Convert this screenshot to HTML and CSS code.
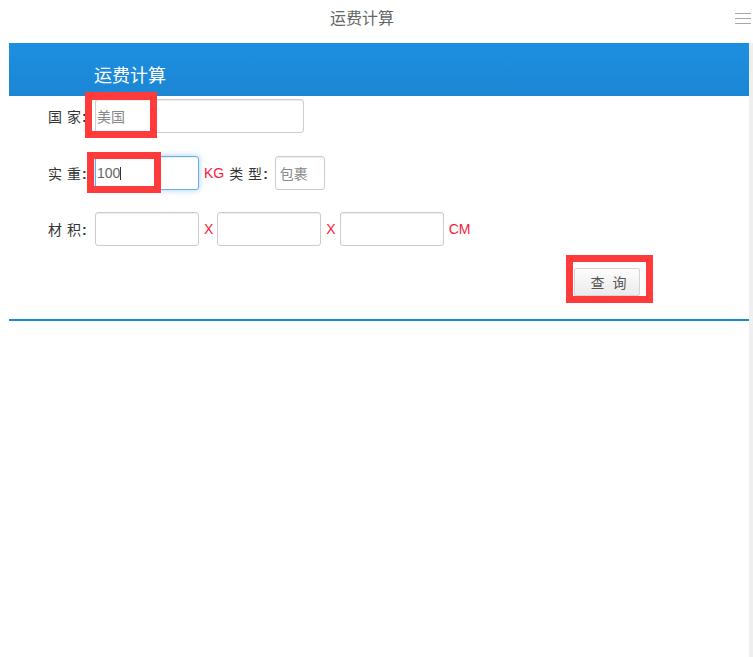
FILE: index.html
```html
<html>
<head>
    <title>运费计算</title>
    <link rel="stylesheet" href="styles.css">
</head>
<body>
    <div class="topbar">
        <span class="top-title">运费计算</span>
        <span class="menu-icon"><i></i><i></i><i></i></span>
    </div>

    <div class="frame">
        <div class="content">
            <div class="panel-head">运费计算</div>

            <form class="calc">
                <div class="row">
                    <label for="country">国 家<b>:</b></label>
                    <input id="country" type="text" value="美国" class="field wide"/>
                </div>
                <div class="row">
                    <label for="weight">实 重<b>:</b></label>
                    <span class="caret-wrap">
                        <input id="weight" type="text" value="100" class="field focused"/>
                        <span class="caret"></span>
                    </span>
                    <span class="unit">KG</span>
                    <label for="kind" class="inline">类 型<b>:</b></label>
                    <input id="kind" type="text" value="包裹" class="field small"/>
                </div>
                <div class="row">
                    <label for="len">材 积<b>:</b></label>
                    <input id="len" type="text" value="" class="field"/>
                    <span class="times">X</span>
                    <input id="wid" type="text" value="" class="field"/>
                    <span class="times">X</span>
                    <input id="hei" type="text" value="" class="field"/>
                    <span class="unit">CM</span>
                </div>
                <div class="actions">
                    <button type="button" id="query">查 询</button>
                </div>
            </form>
        </div>
        <div class="scroll-strip"></div>
    </div>

    <!-- annotation boxes -->
    <div class="mark mark-country"></div>
    <div class="mark mark-weight"></div>
    <div class="mark mark-query"></div>
</body>
</html>
```

FILE: styles.css
```css
body {
    margin: 0;
    font-family: "Liberation Sans", "Noto Sans CJK SC", sans-serif;
    font-size: 14px;
    color: #333;
    background: #fff;
}
.topbar {
    display: flex;
    height: 43px;
}
.top-title {
    flex: 1;
    text-align: center;
    padding-right: 11px;
    line-height: 38px;
    font-size: 16px;
    color: #666;
}
.menu-icon {
    width: 16px;
    margin-right: 2px;
    padding-top: 13px;
}
.menu-icon i {
    display: block;
    height: 1px;
    background: #a8a8a8;
    margin-bottom: 4px;
}
.frame {
    display: flex;
    height: 614px;
    padding-left: 9px;
}
.content {
    flex: 1;
}
.scroll-strip {
    width: 4px;
    background: #efefef;
}
.panel-head {
    box-sizing: border-box;
    height: 53px;
    padding: 20px 0 0 85px;
    line-height: 26px;
    font-size: 18px;
    color: #fff;
    background: linear-gradient(#1e8fe0, #1b86d4);
}
.calc {
    margin: 0;
    padding: 3px 0 23px 0;
    border-bottom: 2px solid #1e88d0;
}
.row {
    display: flex;
    align-items: center;
    height: 34px;
    padding-left: 39px;
    margin-bottom: 22px;
}
.row:first-child {
    margin-bottom: 23px;
}
.row label {
    width: 47px;
    word-spacing: 1px;
    white-space: nowrap;
    color: #333;
}
.row label b {
    margin-left: 1px;
    font-weight: bold;
}
.row label.inline {
    width: auto;
    margin-right: 7px;
}
.field {
    box-sizing: border-box;
    width: 104px;
    height: 34px;
    margin: 0;
    padding: 0 1px;
    border: 1px solid #ccc;
    border-radius: 3px;
    box-shadow: inset 0 1px 1px rgba(0, 0, 0, .075);
    font-family: "Liberation Sans", "Noto Sans CJK SC", sans-serif;
    font-size: 14px;
    color: #888;
    outline: none;
}
.field.wide {
    width: 209px;
}
.field.small {
    width: 50px;
    padding-left: 4px;
}
.field.focused {
    border-color: #66afe9;
    box-shadow: inset 0 1px 1px rgba(0, 0, 0, .075), 0 0 6px rgba(102, 175, 233, .6);
    color: #666;
}
.caret-wrap {
    position: relative;
    display: flex;
}
.caret {
    position: absolute;
    left: 25px;
    top: 11px;
    width: 1px;
    height: 13px;
    background: #333;
}
.unit {
    margin: 0 5px;
    color: #f5213a;
}
.times {
    margin: 0 4px 0 5px;
    color: #f5213a;
}
.actions {
    padding-left: 565px;
}
.actions button {
    box-sizing: border-box;
    width: 66px;
    height: 28px;
    border: 1px solid #d4d4d4;
    border-radius: 2px;
    background: linear-gradient(#fdfdfd, #ebebeb);
    font-family: "Liberation Sans", "Noto Sans CJK SC", sans-serif;
    font-size: 14px;
    letter-spacing: 2px;
    color: #555;
    padding: 0 0 0 5px;
}
.mark {
    position: absolute;
    box-sizing: border-box;
    border: 7px solid #fe3a3a;
}
.mark-country {
    left: 85px;
    top: 92px;
    width: 72px;
    height: 46px;
    border-width: 8px 7px 7px 7px;
}
.mark-weight {
    left: 87px;
    top: 152px;
    width: 74px;
    height: 41px;
}
.mark-query {
    left: 566px;
    top: 255px;
    width: 87px;
    height: 48px;
}
```
